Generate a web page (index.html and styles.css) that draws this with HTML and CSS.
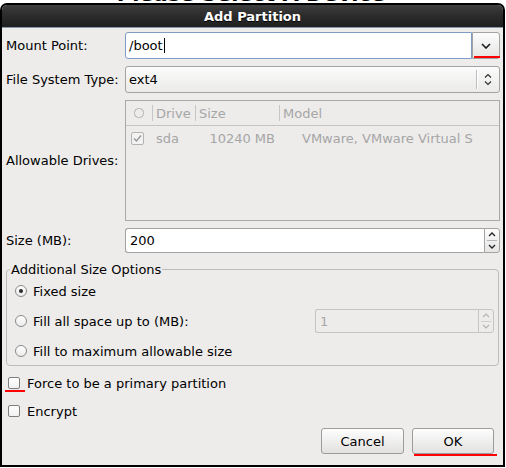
FILE: index.html
```html
<!DOCTYPE html>
<html>
<head>
<meta charset="utf-8">
<title>Add Partition</title>
<link rel="stylesheet" href="styles.css">
</head>
<body>
<h1 class="bg-title">Please Select A Device</h1>
<div class="dialog">
  <div class="titlebar">Add Partition</div>
  <div class="content">
    <div class="form">
      <div class="lbl">Mount Point:</div>
      <div class="combo-entry">
        <div class="entry"><span>/boot</span><span class="caret"></span></div>
        <div class="drop-btn"><svg width="10" height="6" viewBox="0 0 10 6"><polyline points="1,1 5,5 9,1" fill="none" stroke="#1b1b1b" stroke-width="1.6"/></svg></div>
      </div>

      <div class="lbl">File System Type:</div>
      <div class="combo">
        <span class="combo-text">ext4</span>
        <span class="combo-sep"></span>
        <span class="combo-arrows"><svg width="8" height="13" viewBox="0 0 8 13"><polyline points="1,4.5 4,1.5 7,4.5" fill="none" stroke="#333" stroke-width="1.2"/><polyline points="1,8.5 4,11.5 7,8.5" fill="none" stroke="#333" stroke-width="1.2"/></svg></span>
      </div>

      <div class="lbl">Allowable Drives:</div>
      <div class="tree">
        <div class="tree-head">
          <div class="th th-icon"><svg width="10" height="10" viewBox="0 0 10 10"><rect x="0.5" y="0.5" width="9" height="9" rx="4" fill="none" stroke="#b0b0b0"/></svg></div>
          <div class="th">Drive</div>
          <div class="th">Size</div>
          <div class="th">Model</div>
        </div>
        <div class="tree-row">
          <div class="td td-check"><span class="chk chk-dis"><svg width="11" height="11" viewBox="0 0 11 11"><polyline points="2,5.5 4.5,8 9,2.5" fill="none" stroke="#9a9a9a" stroke-width="1.5"/></svg></span></div>
          <div class="td td-name">sda</div>
          <div class="td td-size">10240 MB</div>
          <div class="td td-model">VMware, VMware Virtual S</div>
        </div>
      </div>

      <div class="lbl">Size (MB):</div>
      <div class="spin">
        <div class="spin-entry">200</div>
        <div class="spin-btns">
          <span><svg width="8" height="5" viewBox="0 0 8 5"><polyline points="1,4 4,1 7,4" fill="none" stroke="#222" stroke-width="1.3"/></svg></span>
          <span><svg width="8" height="5" viewBox="0 0 8 5"><polyline points="1,1 4,4 7,1" fill="none" stroke="#222" stroke-width="1.3"/></svg></span>
        </div>
      </div>
    </div>

    <fieldset class="frame">
      <legend>Additional Size Options</legend>
      <div class="radio-row"><span class="radio on"></span><span>Fixed size</span></div>
      <div class="radio-row"><span class="radio"></span><span>Fill all space up to (MB):</span>
        <div class="spin spin-dis">
          <div class="spin-entry">1</div>
          <div class="spin-btns">
            <span><svg width="8" height="5" viewBox="0 0 8 5"><polyline points="1,4 4,1 7,4" fill="none" stroke="#b4b4b4" stroke-width="1.2"/></svg></span>
            <span><svg width="8" height="5" viewBox="0 0 8 5"><polyline points="1,1 4,4 7,1" fill="none" stroke="#b4b4b4" stroke-width="1.2"/></svg></span>
          </div>
        </div>
      </div>
      <div class="radio-row"><span class="radio"></span><span>Fill to maximum allowable size</span></div>
    </fieldset>

    <div class="check-row"><span class="chk marked"></span><span>Force to be a primary partition</span></div>
    <div class="check-row"><span class="chk"></span><span>Encrypt</span></div>

    <div class="buttons">
      <button class="btn btn-cancel">Cancel</button>
      <button class="btn btn-ok">OK</button>
    </div>
  </div>
</div>
</body>
</html>
```
FILE: styles.css
```css
* { box-sizing: border-box; }
html, body { margin: 0; padding: 0; }
body {
  width: 506px;
  height: 468px;
  overflow: hidden;
  position: relative;
  background: #fff;
  font-family: "DejaVu Sans", "Noto Sans", sans-serif;
  font-size: 13px;
  color: #000;
}
.bg-title {
  margin: -16px 0 0;
  font-size: 21px;
  line-height: 21px;
  font-weight: bold;
  text-align: center;
  padding-right: 4px;
}
.dialog {
  position: absolute;
  left: 0;
  top: 3px;
  width: 505px;
  height: 464px;
  border: 2px solid #000;
  border-radius: 7px 7px 0 0;
  background: #edeceb;
  display: flex;
  flex-direction: column;
  overflow: hidden;
}
.titlebar {
  flex: none;
  height: 23px;
  background: linear-gradient(#3e3e3e 0%, #2b2b2b 50%, #1f1f1f 100%);
  border-bottom: 1px solid #8796a8;
  color: #fff;
  font-weight: bold;
  text-align: center;
  line-height: 23px;
  text-shadow: 0 1px 0 #000;
}
.content {
  flex: 1;
  display: flex;
  flex-direction: column;
  padding-top: 4px;
}
.form {
  display: grid;
  grid-template-columns: 119px 1fr;
  grid-template-rows: 27px 27px 121px 25px;
  row-gap: 7px;
  padding: 0 3px 0 4px;
}
.lbl { align-self: center; white-space: nowrap; }

/* mount point combo entry */
.combo-entry { display: flex; }
.entry {
  flex: 1;
  display: flex;
  align-items: center;
  padding-left: 3px;
  background: #fff;
  border: 1px solid #7f9cc4;
  border-radius: 3px 0 0 3px;
}
.caret { width: 1px; height: 15px; background: #000; margin-left: 1px; }
.drop-btn {
  width: 28px;
  position: relative;
  display: flex;
  align-items: center;
  justify-content: center;
  border: 1px solid #a3a3a3;
  border-radius: 0 3px 3px 0;
  background: linear-gradient(#fdfdfd, #e5e4e3);
}
.drop-btn::after {
  content: "";
  position: absolute;
  left: 1px;
  right: -1px;
  bottom: 0;
  height: 2px;
  background: #f00;
}

/* file system combo */
.combo {
  display: flex;
  align-items: center;
  border: 1px solid #a3a3a3;
  border-radius: 3px;
  background: linear-gradient(#fbfbfb, #ebeae9);
  padding-left: 3px;
}
.combo-text { flex: 1; }
.combo-sep { width: 1px; height: 19px; background: #bdbdbd; box-shadow: 1px 0 0 #fff; }
.combo-arrows { width: 22px; display: flex; justify-content: center; }

/* drives tree */
.tree { border: 1px solid #a9a9a9; background: #edeceb; color: #a6a6a6; }
.tree-head, .tree-row { display: grid; grid-template-columns: 26px 43px 84px 1fr; }
.tree-head { height: 25px; border-bottom: 1px solid #c4c4c4; }
.th {
  display: flex;
  align-items: center;
  padding-left: 3px;
  border-left: 1px solid #c6c6c6;
  margin: 4px 0;
  white-space: nowrap;
}
.th-icon { border-left: none; padding-left: 8px; }
.tree-row { height: 24px; align-items: center; }
.td { white-space: nowrap; }
.td-check { padding-left: 5px; display: flex; }
.td-name { padding-left: 4px; }
.td-size { text-align: right; padding-right: 4px; }
.td-model { padding-left: 23px; overflow: hidden; }

/* spin buttons */
.spin { display: flex; }
.spin-entry {
  flex: 1;
  display: flex;
  align-items: center;
  padding-left: 4px;
  background: #fff;
  border: 1px solid #a3a3a3;
  border-right: none;
  border-radius: 3px 0 0 3px;
}
.spin-btns {
  width: 16px;
  display: flex;
  flex-direction: column;
  border: 1px solid #a3a3a3;
  border-radius: 0 3px 3px 0;
  background: linear-gradient(#fcfcfc, #e6e5e4);
}
.spin-btns span { flex: 1; display: flex; align-items: center; justify-content: center; }
.spin-btns span + span { border-top: 1px solid #b4b4b4; margin: 0 2px; }

/* frame */
.frame {
  margin: 9px 4px 0 4px;
  padding: 1px 0 1px 0;
  border: 1px solid #bdbcbb;
  border-radius: 4px;
  min-width: 0;
}
.frame legend { margin-left: 3px; padding: 0 1px; line-height: 15px; }
.radio-row { display: flex; align-items: center; height: 26px; padding-left: 8px; }
.radio-row + .radio-row { margin-top: 4px; }
.radio {
  position: relative;
  width: 12px;
  height: 12px;
  border: 1px solid #8a8a8a;
  border-radius: 50%;
  background: linear-gradient(#fff, #ebebeb);
  margin-right: 6px;
}
.radio.on::after {
  content: "";
  position: absolute;
  left: 3px;
  top: 3px;
  width: 4px;
  height: 4px;
  border-radius: 50%;
  background: #2b2b2b;
}
.spin-dis { margin-left: auto; margin-right: 4px; width: 179px; height: 24px; }
.spin-dis .spin-entry { background: #edeceb; border-color: #c4c4c4; color: #a8a8a8; }
.spin-dis .spin-btns { border-color: #c4c4c4; background: #edeceb; }
.spin-dis .spin-btns span + span { border-top-color: #cfcfcf; }

/* checkboxes */
.check-row { display: flex; align-items: center; height: 22px; padding-left: 6px; margin-top: 6px; }
.chk {
  position: relative;
  display: inline-flex;
  align-items: center;
  justify-content: center;
  width: 12px;
  height: 12px;
  border: 1px solid #7e7e7e;
  border-radius: 2px;
  background: linear-gradient(#fff, #f1f1f1);
  margin-right: 7px;
}
.chk-dis { width: 13px; height: 13px; border-color: #b4b4b4; background: #f2f2f2; margin-right: 0; }
.chk.marked::after {
  content: "";
  position: absolute;
  left: -4px;
  top: 12px;
  width: 20px;
  height: 2px;
  background: #f00;
}

/* buttons */
.buttons { display: flex; justify-content: flex-end; gap: 8px; padding-right: 9px; margin-top: 6px; }
.btn {
  position: relative;
  height: 26px;
  padding: 0;
  font: 13px "DejaVu Sans", "Noto Sans", sans-serif;
  color: #000;
  border: 1px solid #9c9c9c;
  border-radius: 3px;
  background: linear-gradient(#fdfdfd, #e2e1e0);
}
.btn-cancel { width: 83px; }
.btn-ok { width: 82px; }
.btn-ok::after {
  content: "";
  position: absolute;
  left: 1px;
  right: -4px;
  bottom: -3px;
  height: 2px;
  background: #f00;
}
```
